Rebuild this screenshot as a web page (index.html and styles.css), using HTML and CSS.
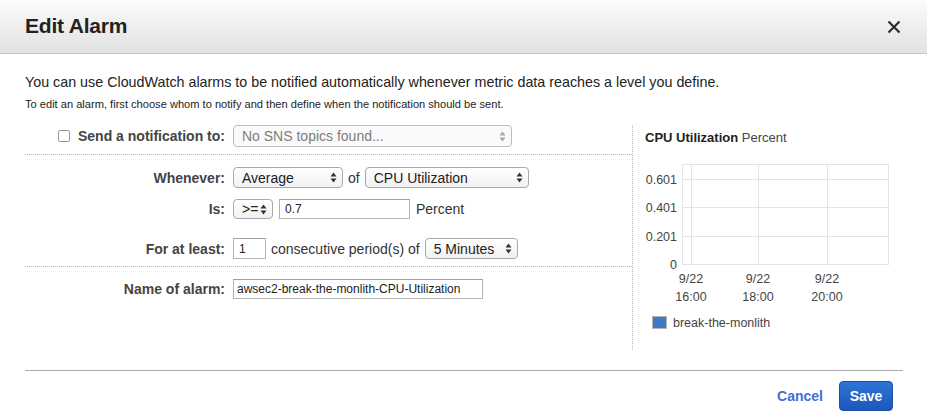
FILE: index.html
```html
<!DOCTYPE html>
<html>
<head>
<meta charset="utf-8">
<link rel="stylesheet" href="styles.css">
</head>
<body>
<div class="dialog">
  <div class="header">
    <h1 class="title">Edit Alarm</h1>
    <span class="close" aria-label="Close">
      <svg width="14" height="14" viewBox="0 0 14 14"><path d="M1.5 1.5 L12.5 12.5 M12.5 1.5 L1.5 12.5" stroke="#2b2b2b" stroke-width="2.2" fill="none"/></svg>
    </span>
  </div>
  <div class="content">
    <p class="intro">You can use CloudWatch alarms to be notified automatically whenever metric data reaches a level you define.</p>
    <p class="sub">To edit an alarm, first choose whom to notify and then define when the notification should be sent.</p>
    <div class="columns">
      <div class="form">
        <div class="section first">
          <div class="row r-notify">
            <div class="label"><span class="checkbox"></span>Send a notification to:</div>
            <div class="select disabled w-sns"><span>No SNS topics found...</span>
              <svg class="arrows" width="7" height="11" viewBox="0 0 7 11"><path d="M3.5 0.5 L6.5 4.5 L0.5 4.5 Z M3.5 10.5 L6.5 6.5 L0.5 6.5 Z" fill="#aaa"/></svg>
            </div>
          </div>
        </div>
        <div class="section mid">
          <div class="row r-when">
            <div class="label">Whenever:</div>
            <div class="select w-avg"><span>Average</span>
              <svg class="arrows" width="7" height="11" viewBox="0 0 7 11"><path d="M3.5 0.5 L6.5 4.5 L0.5 4.5 Z M3.5 10.5 L6.5 6.5 L0.5 6.5 Z" fill="#333"/></svg>
            </div>
            <span class="text of">of</span>
            <div class="select w-cpu"><span>CPU Utilization</span>
              <svg class="arrows" width="7" height="11" viewBox="0 0 7 11"><path d="M3.5 0.5 L6.5 4.5 L0.5 4.5 Z M3.5 10.5 L6.5 6.5 L0.5 6.5 Z" fill="#333"/></svg>
            </div>
          </div>
          <div class="row r-is">
            <div class="label">Is:</div>
            <div class="select w-op"><span>&gt;=</span>
              <svg class="arrows" width="7" height="11" viewBox="0 0 7 11"><path d="M3.5 0.5 L6.5 4.5 L0.5 4.5 Z M3.5 10.5 L6.5 6.5 L0.5 6.5 Z" fill="#333"/></svg>
            </div>
            <div class="input w-val">0.7</div>
            <span class="text pct">Percent</span>
          </div>
          <div class="row r-for">
            <div class="label">For at least:</div>
            <div class="input w-num">1</div>
            <span class="text consec">consecutive period(s) of</span>
            <div class="select w-min"><span>5 Minutes</span>
              <svg class="arrows" width="7" height="11" viewBox="0 0 7 11"><path d="M3.5 0.5 L6.5 4.5 L0.5 4.5 Z M3.5 10.5 L6.5 6.5 L0.5 6.5 Z" fill="#333"/></svg>
            </div>
          </div>
        </div>
        <div class="section last">
          <div class="row r-name">
            <div class="label">Name of alarm:</div>
            <div class="input w-name">awsec2-break-the-monlith-CPU-Utilization</div>
          </div>
        </div>
      </div>
      <div class="chart">
        <div class="chart-title"><b>CPU Utilization</b> Percent</div>
        <svg class="plot" width="270" height="200" viewBox="0 0 270 200">
          <g stroke="#e4e4e4" stroke-width="1" fill="none">
            <rect x="49.5" y="14.5" width="206" height="100"/>
            <line x1="58.5" y1="14" x2="58.5" y2="115"/>
            <line x1="125.5" y1="14" x2="125.5" y2="115"/>
            <line x1="194.5" y1="14" x2="194.5" y2="115"/>
            <line x1="49" y1="29.5" x2="256" y2="29.5"/>
            <line x1="49" y1="57.5" x2="256" y2="57.5"/>
            <line x1="49" y1="86.5" x2="256" y2="86.5"/>
          </g>
          <g class="axis" text-anchor="end">
            <text x="44" y="33.5">0.601</text>
            <text x="44" y="61.5">0.401</text>
            <text x="44" y="90.5">0.201</text>
            <text x="44" y="118.5">0</text>
          </g>
          <g class="axis" text-anchor="middle">
            <text x="58" y="132.5">9/22</text>
            <text x="58" y="150.5">16:00</text>
            <text x="125" y="132.5">9/22</text>
            <text x="125" y="150.5">18:00</text>
            <text x="194" y="132.5">9/22</text>
            <text x="194" y="150.5">20:00</text>
          </g>
          <rect x="19.5" y="166.5" width="14" height="12" fill="#3d7bc9" stroke="#b5b5b5" stroke-width="1"/>
          <text class="axis" x="40" y="176.5">break-the-monlith</text>
        </svg>
      </div>
    </div>
    <div class="footer">
      <a class="cancel">Cancel</a>
      <button class="save">Save</button>
    </div>
  </div>
</div>
</body>
</html>
```

FILE: styles.css
```css
html, body {
  margin: 0;
  padding: 0;
  background: #fff;
}
body {
  font-family: "Liberation Sans", Arial, Helvetica, sans-serif;
  color: #222;
  width: 927px;
  height: 419px;
  overflow: hidden;
}
.header {
  height: 53px;
  border-bottom: 1px solid #c6c6c6;
  background: linear-gradient(#fbfbfb, #e2e2e2);
  display: flex;
  align-items: center;
  justify-content: space-between;
  padding: 0 26px 0 25px;
}
.title {
  margin: 0;
  font-size: 21px;
  font-weight: bold;
  color: #222;
  letter-spacing: -0.2px;
  position: relative;
  top: -1px;
}
.close {
  display: flex;
  width: 14px;
  height: 14px;
}
.content {
  padding: 19px 24px 0 25px;
}
.intro {
  margin: 0;
  font-size: 14.3px;
  line-height: 18px;
  color: #222;
}
.sub {
  margin: 6px 0 0;
  font-size: 11.1px;
  line-height: 14px;
  color: #222;
}
.columns {
  display: flex;
  margin-top: 14px;
  height: 225px;
}
.form {
  width: 607px;
}
.section.first {
  padding-bottom: 7px;
  border-bottom: 1px dotted #b8b8b8;
}
.section.mid {
  padding-top: 12px;
  padding-bottom: 7px;
  border-bottom: 1px dotted #b8b8b8;
}
.section.last {
  padding-top: 12px;
}
.row {
  display: flex;
  align-items: center;
}
.r-notify { height: 22px; }
.r-when { height: 21px; }
.r-is { height: 20px; margin-top: 11px; }
.r-for { height: 21px; margin-top: 19px; }
.r-name { height: 20px; }
.label {
  width: 200px;
  margin-right: 8px;
  text-align: right;
  font-size: 14px;
  font-weight: bold;
  color: #444;
  display: flex;
  align-items: center;
  justify-content: flex-end;
}
.checkbox {
  width: 10px;
  height: 10px;
  border: 1px solid #999;
  border-radius: 2px;
  background: #fff;
  margin-right: 8px;
}
.select {
  box-sizing: border-box;
  height: 100%;
  border: 1px solid #a9a9a9;
  border-radius: 4px;
  background: linear-gradient(#ffffff, #f1f1f1);
  display: flex;
  align-items: center;
  justify-content: space-between;
  padding: 0 5px 0 8px;
  font-size: 14px;
  color: #222;
}
.select.disabled {
  border-color: #bdbdbd;
  color: #7d7d7d;
  background: #fafafa;
}
.arrows { flex: none; }
.w-sns { width: 279px; }
.w-avg { width: 110px; }
.w-cpu { width: 164px; }
.w-op { width: 40px; padding-left: 8px; }
.w-min { width: 93px; }
.text {
  font-size: 14px;
  color: #333;
}
.of { margin: 0 5px; }
.pct { margin-left: 6px; }
.consec { margin: 0 5px; }
.input {
  box-sizing: border-box;
  height: 100%;
  border: 1px solid #b4b4b4;
  border-top-color: #a0a0a0;
  background: #fff;
  font-size: 12px;
  color: #222;
  display: flex;
  align-items: center;
  padding: 0 5px;
}
.w-val { width: 131px; margin-left: 6px; }
.w-num { width: 33px; }
.w-name { width: 250px; padding-left: 3px; }
.chart {
  width: 270px;
  border-left: 1px dotted #b8b8b8;
}
.chart-title {
  margin: 5px 0 0 12px;
  font-size: 13px;
  line-height: 16px;
  color: #444;
}
.chart-title b { color: #222; }
.plot {
  display: block;
  margin-top: 4px;
}
.axis {
  font-family: "Liberation Sans", Arial, Helvetica, sans-serif;
  font-size: 12.5px;
  fill: #444;
}
.footer {
  margin-top: 20px;
  border-top: 1px solid #aaa;
  display: flex;
  justify-content: flex-end;
  align-items: center;
  padding: 10px 10px 0 0;
}
.cancel {
  font-size: 14px;
  font-weight: bold;
  color: #3b72d2;
  margin-right: 16px;
}
.save {
  width: 54px;
  height: 30px;
  border: 1px solid #1b4fa8;
  border-radius: 4px;
  background: linear-gradient(#2d74d9, #1d57b9);
  color: #fff;
  font-family: "Liberation Sans", Arial, Helvetica, sans-serif;
  font-size: 14px;
  font-weight: bold;
  padding: 0;
}
```
